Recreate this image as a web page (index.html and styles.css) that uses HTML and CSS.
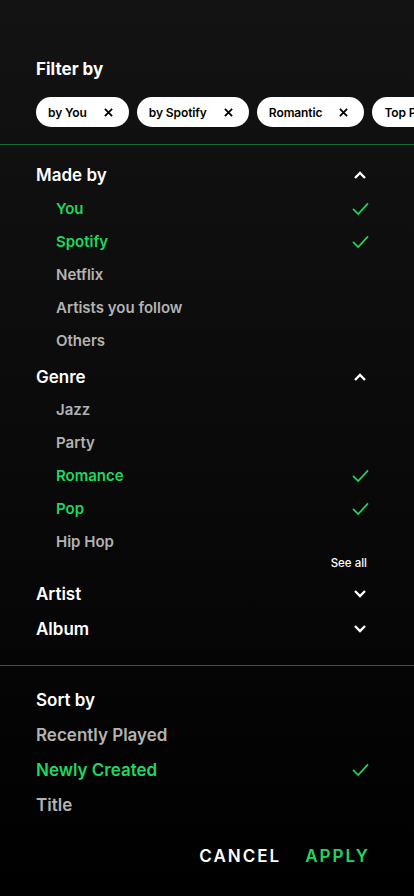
FILE: index.html
```html
<!DOCTYPE html>
<html>
<head>
<meta charset="utf-8">
<link rel="stylesheet" href="styles.css">
</head>
<body>
<div class="screen">
  <section class="filter">
    <h2 class="title">Filter by</h2>
    <div class="chips">
      <div class="chip"><span>by You</span><svg class="x" viewBox="0 0 10 10"><path d="M1 1L9 9M9 1L1 9"/></svg></div>
      <div class="chip"><span>by Spotify</span><svg class="x" viewBox="0 0 10 10"><path d="M1 1L9 9M9 1L1 9"/></svg></div>
      <div class="chip"><span>Romantic</span><svg class="x" viewBox="0 0 10 10"><path d="M1 1L9 9M9 1L1 9"/></svg></div>
      <div class="chip"><span>Top Pop</span><svg class="x" viewBox="0 0 10 10"><path d="M1 1L9 9M9 1L1 9"/></svg></div>
    </div>
  </section>
  <div class="rule"></div>
  <section class="groups">
    <div class="group">
      <div class="ghead"><span>Made by</span><svg class="chev" viewBox="0 0 14 10"><path d="M2 8L7 3L12 8"/></svg></div>
      <div class="item on"><span>You</span><svg class="check" viewBox="0 0 20 16"><path d="M2 8.5L7.5 14L18 2.5"/></svg></div>
      <div class="item on"><span>Spotify</span><svg class="check" viewBox="0 0 20 16"><path d="M2 8.5L7.5 14L18 2.5"/></svg></div>
      <div class="item"><span>Netflix</span></div>
      <div class="item"><span>Artists you follow</span></div>
      <div class="item"><span>Others</span></div>
    </div>
    <div class="group">
      <div class="ghead"><span>Genre</span><svg class="chev" viewBox="0 0 14 10"><path d="M2 8L7 3L12 8"/></svg></div>
      <div class="item"><span>Jazz</span></div>
      <div class="item"><span>Party</span></div>
      <div class="item on"><span>Romance</span><svg class="check" viewBox="0 0 20 16"><path d="M2 8.5L7.5 14L18 2.5"/></svg></div>
      <div class="item on"><span>Pop</span><svg class="check" viewBox="0 0 20 16"><path d="M2 8.5L7.5 14L18 2.5"/></svg></div>
      <div class="item"><span>Hip Hop</span></div>
      <div class="seeall">See all</div>
    </div>
    <div class="ghead closed"><span>Artist</span><svg class="chev" viewBox="0 0 14 10"><path d="M2 2L7 7L12 2"/></svg></div>
    <div class="ghead closed"><span>Album</span><svg class="chev" viewBox="0 0 14 10"><path d="M2 2L7 7L12 2"/></svg></div>
  </section>
  <div class="rule"></div>
  <section class="sort">
    <h2 class="title">Sort by</h2>
    <div class="sitem"><span>Recently Played</span></div>
    <div class="sitem on"><span>Newly Created</span><svg class="check" viewBox="0 0 20 16"><path d="M2 8.5L7.5 14L18 2.5"/></svg></div>
    <div class="sitem"><span>Title</span></div>
  </section>
  <div class="actions">
    <button class="btn cancel">CANCEL</button>
    <button class="btn apply">APPLY</button>
  </div>
</div>
</body>
</html>
```

FILE: styles.css
```css
* { box-sizing: border-box; }
html, body { margin: 0; padding: 0; }
body {
  width: 414px;
  height: 896px;
  overflow: hidden;
  background: linear-gradient(180deg, #131313 0%, #0b0b0b 45%, #000 100%);
  font-family: "Inter", "Noto Sans", sans-serif;
  color: #fff;
}
.screen { display: flex; flex-direction: column; }
.filter { padding: 58px 0 0 36px; }
.title {
  margin: 0;
  font-size: 17px;
  font-weight: 700;
  line-height: 22px;
}
.chips {
  display: flex;
  gap: 8px;
  margin-top: 17px;
  overflow: hidden;
  white-space: nowrap;
}
.chip {
  flex: none;
  display: flex;
  align-items: center;
  height: 30px;
  padding: 0 16px 0 12px;
  background: #fff;
  color: #000;
  border-radius: 15px;
  font-size: 12px;
  font-weight: 600;
  letter-spacing: -0.1px;
}
.chip span { margin-right: 17px; }
.x { width: 9px; height: 9px; stroke: #000; stroke-width: 2; fill: none; }
.rule { height: 1px; background: #1a6b33; margin-top: 17px; }
.groups { padding: 19px 46px 0 36px; }
.groups + .rule { margin-top: 18px; }
.ghead {
  display: flex;
  justify-content: space-between;
  align-items: center;
  height: 22px;
  font-size: 17px;
  font-weight: 600;
}
.chev { width: 14px; height: 10px; stroke: #fff; stroke-width: 2.3; fill: none; margin-right: 1px; }
.group .ghead { margin-bottom: 5.5px; }
.item {
  display: flex;
  justify-content: space-between;
  align-items: center;
  height: 33px;
  padding-left: 20px;
  font-size: 15px;
  font-weight: 600;
  color: #b3b3b3;
}
.item.on, .sitem.on { color: #1ed760; }
.check { width: 19px; height: 15px; stroke: #1ed760; stroke-width: 1.8; fill: none; margin-right: -2px; }
.group + .group { margin-top: 9px; }
.seeall {
  text-align: right;
  font-size: 11.5px;
  font-weight: 500;
  margin: -2.5px 1px 0 0;
  line-height: 14px;
}
.groups > .ghead.closed { height: 35px; }
.groups > .group + .ghead.closed { margin-top: 7px; }
.sort { padding: 23px 46px 0 36px; }
.sitem {
  display: flex;
  justify-content: space-between;
  align-items: center;
  height: 35px;
  font-size: 17px;
  font-weight: 600;
  color: #b3b3b3;
}
.sort .title { margin-bottom: 6.5px; font-weight: 600; }
.actions {
  display: flex;
  justify-content: flex-end;
  gap: 24px;
  padding: 22.5px 46px 0 0;
}
.btn {
  border: none;
  background: none;
  padding: 0;
  font-family: inherit;
  font-size: 17px;
  font-weight: 600;
  letter-spacing: 2px;
  line-height: 22px;
}
.cancel { color: #fff; }
.apply { color: #1ed760; margin-right: -2px; }
```
